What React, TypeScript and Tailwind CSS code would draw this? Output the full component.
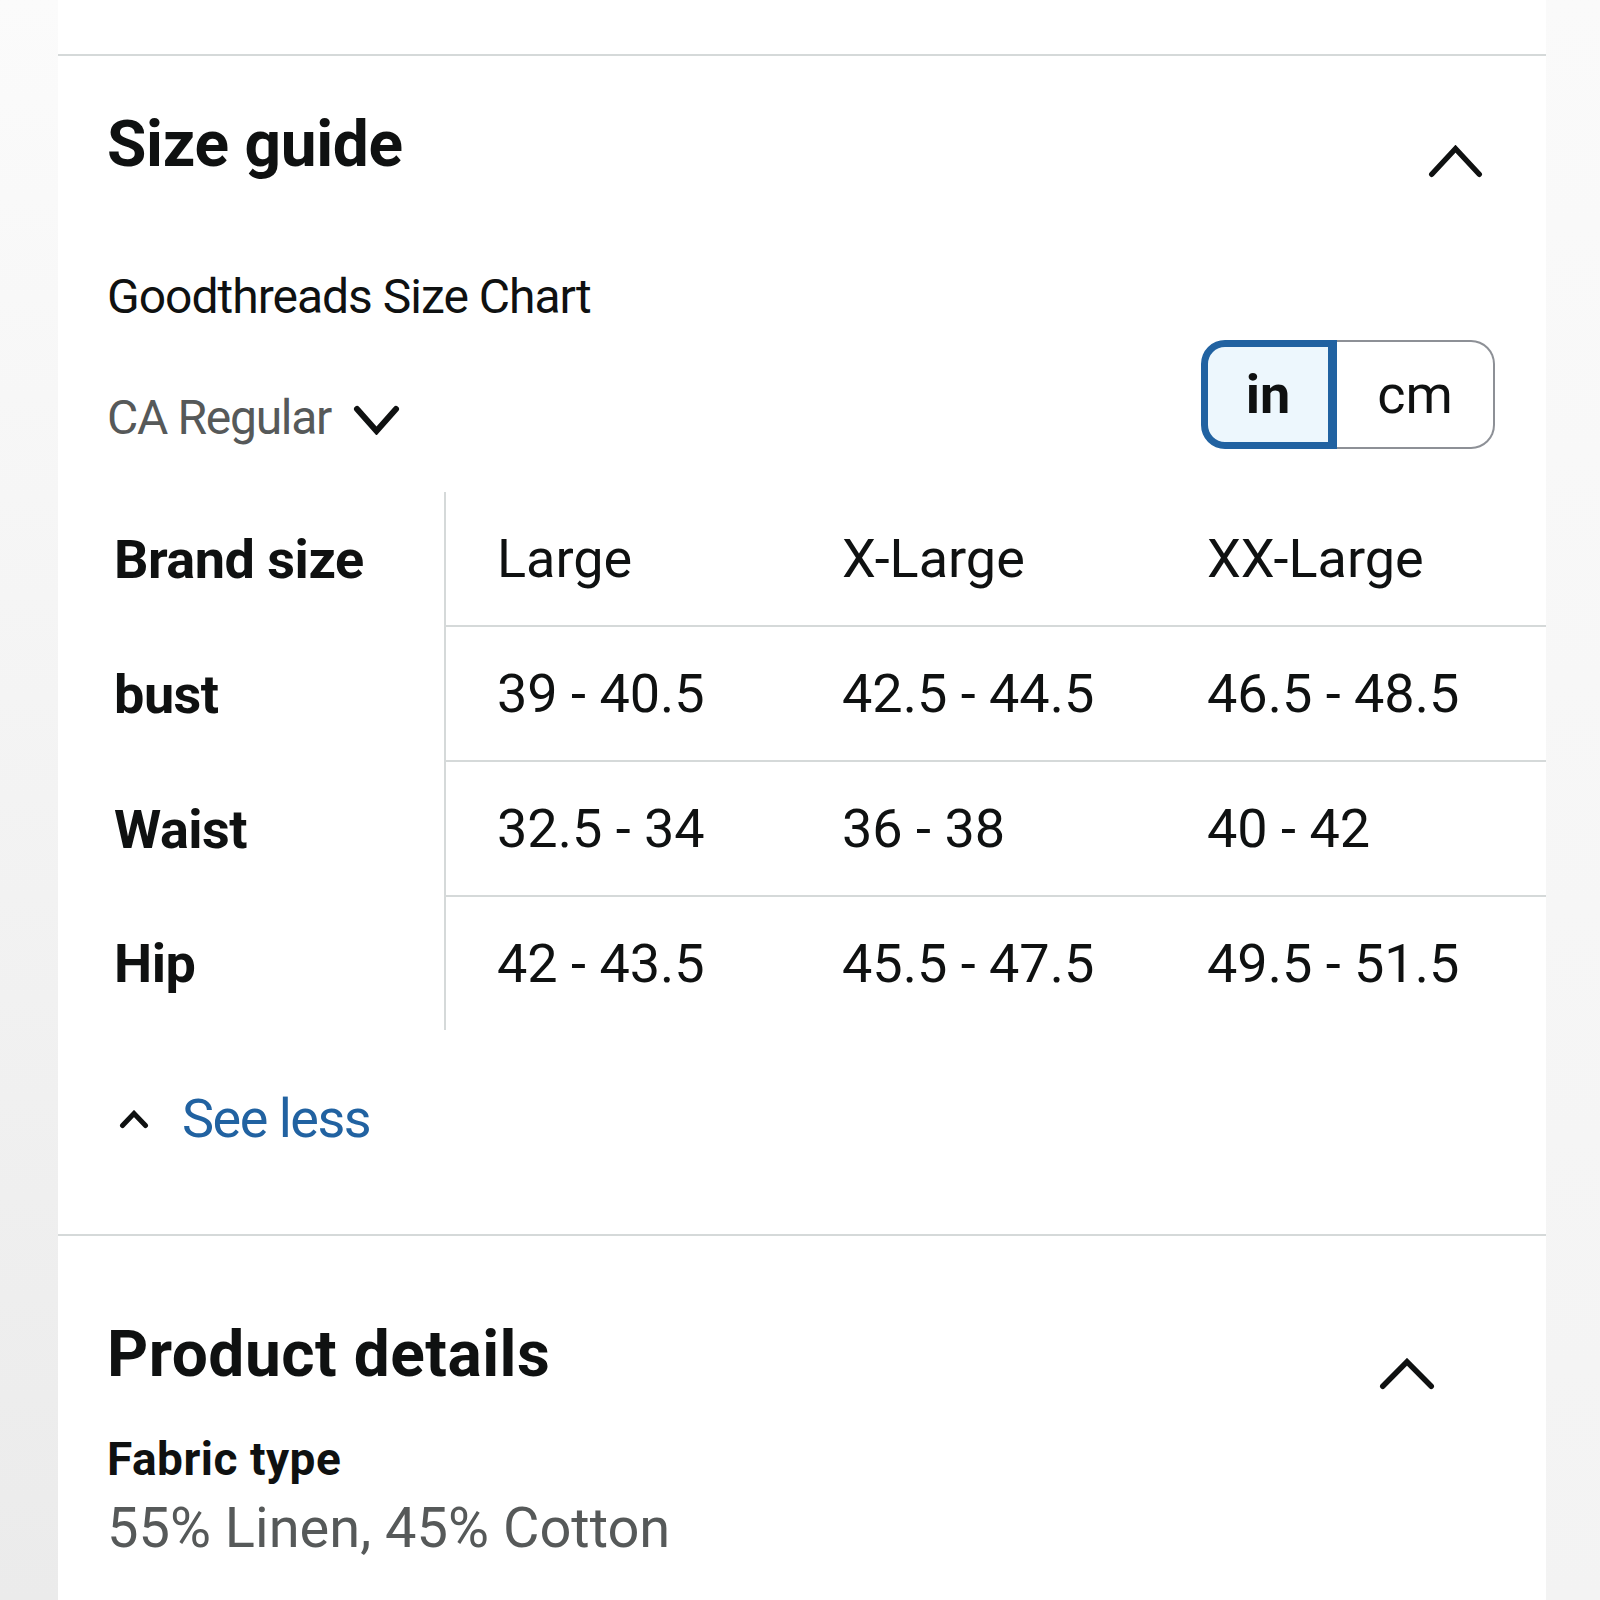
import React from "react";

const rows = [
  ["Brand size", "Large", "X-Large", "XX-Large"],
  ["bust", "39 - 40.5", "42.5 - 44.5", "46.5 - 48.5"],
  ["Waist", "32.5 - 34", "36 - 38", "40 - 42"],
  ["Hip", "42 - 43.5", "45.5 - 47.5", "49.5 - 51.5"],
];

function ChevronUp({ w, h, stroke, className }: { w: number; h: number; stroke: number; className?: string }) {
  const p = stroke / 2 + 1;
  return (
    <svg className={className} width={w} height={h} viewBox={`0 0 ${w} ${h}`} fill="none">
      <polyline
        points={`${p},${h - p} ${w / 2},${p} ${w - p},${h - p}`}
        stroke="#0f1111"
        strokeWidth={stroke}
        strokeLinecap="round"
        strokeLinejoin="miter"
      />
    </svg>
  );
}

function ChevronDown({ w, h, stroke, className }: { w: number; h: number; stroke: number; className?: string }) {
  const p = stroke / 2 + 1;
  return (
    <svg className={className} width={w} height={h} viewBox={`0 0 ${w} ${h}`} fill="none">
      <polyline
        points={`${p},${p} ${w / 2},${h - p} ${w - p},${p}`}
        stroke="#0f1111"
        strokeWidth={stroke}
        strokeLinecap="round"
        strokeLinejoin="miter"
      />
    </svg>
  );
}

export default function App() {
  return (
    <div className="flex w-[1600px] h-[1600px] overflow-hidden bg-white font-[Roboto,sans-serif] text-[#0f1111]">
      <div className="w-[58px] shrink-0 bg-gradient-to-b from-[#fbfbfb] to-[#ebebeb]" />
      <div className="w-[1488px] shrink-0 bg-white flex flex-col">
        <div className="h-[54px] shrink-0" />
        <div className="h-[2px] shrink-0 bg-[#d5d9d9]" />

        <div className="pl-[49px] flex flex-col">
          <div className="mt-[57px] flex justify-between items-start pr-[63px]">
            <h2 className="text-[64px] leading-none font-bold tracking-[-0.3px]">Size guide</h2>
            <ChevronUp className="mt-[32px]" w={55} h={33} stroke={5.5} />
          </div>

          <div className="mt-[95px] text-[48px] leading-none tracking-[-1px]">Goodthreads Size Chart</div>

          <div className="mt-[19px] flex justify-between items-start pr-[51px]">
            <div className="mt-[54px] flex items-center text-[#565959] text-[48px] leading-none tracking-[-1.3px]">
              <span>CA Regular</span>
              <ChevronDown className="ml-[22px] mt-[4px]" w={47} h={30} stroke={6} />
            </div>
            <div className="flex h-[109px] w-[294px]">
              <div className="w-[136px] flex items-center justify-center rounded-l-[24px] border-[7px] border-r-[9px] border-[#2162a1] bg-[#edf7fd] text-[54px] leading-none font-bold">
                in
              </div>
              <div className="flex-1 flex items-center justify-center rounded-r-[24px] border-2 border-l-0 border-[#8d9096] bg-white text-[54px] leading-none">
                cm
              </div>
            </div>
          </div>

          <div className="mt-[43px] flex flex-col">
            {rows.map((r, i) => {
              const last = i === rows.length - 1;
              return (
                <div key={i} className={`flex ${last ? "h-[133px]" : "h-[135px]"}`}>
                  <div className="w-[337px] shrink-0 pl-[7px] flex items-center text-[54px] leading-none font-bold tracking-[-0.5px]">
                    {r[0]}
                  </div>
                  <div className="w-[2px] shrink-0 bg-[#d5d9d9]" />
                  <div
                    className={`flex-1 flex items-center text-[54px] leading-none ${
                      last ? "" : "border-b-2 border-[#d5d9d9]"
                    }`}
                  >
                    <div className="w-[396px] shrink-0 pl-[51px]">{r[1]}</div>
                    <div className="w-[365px] shrink-0">{r[2]}</div>
                    <div className="flex-1">{r[3]}</div>
                  </div>
                </div>
              );
            })}
          </div>

          <div className="mt-[62px] mb-[88px] flex items-center">
            <ChevronUp className="ml-[12px]" w={30} h={19} stroke={5} />
            <span className="ml-[33px] text-[54px] leading-none text-[#2162a1] tracking-[-1.5px]">See less</span>
          </div>
        </div>

        <div className="h-[2px] shrink-0 bg-[#d5d9d9]" />

        <div className="pl-[49px] flex flex-col">
          <div className="mt-[87px] flex justify-between items-start pr-[111px]">
            <h2 className="text-[64px] leading-none font-bold tracking-[0.5px]">Product details</h2>
            <ChevronUp className="mt-[35px]" w={56} h={32} stroke={5.5} />
          </div>
          <div className="mt-[46px] text-[46px] leading-none font-bold tracking-[0.5px]">Fabric type</div>
          <div className="mt-[18px] text-[56px] leading-none text-[#565959]">55% Linen, 45% Cotton</div>
        </div>
      </div>
      <div className="flex-1 bg-gradient-to-b from-[#fafafa] to-[#f3f3f3]" />
    </div>
  );
}
